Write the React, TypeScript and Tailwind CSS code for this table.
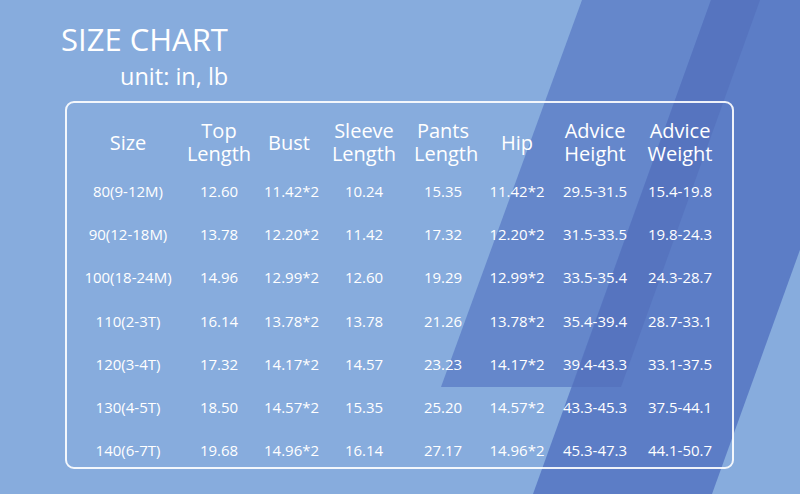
import React from 'react';

const headers: string[][] = [
  ['Size'],
  ['Top', 'Length'],
  ['Bust'],
  ['Sleeve', 'Length'],
  ['Pants', 'Length'],
  ['Hip'],
  ['Advice', 'Height'],
  ['Advice', 'Weight'],
];

const rows: string[][] = [
  ['80(9-12M)', '12.60', '11.42*2', '10.24', '15.35', '11.42*2', '29.5-31.5', '15.4-19.8'],
  ['90(12-18M)', '13.78', '12.20*2', '11.42', '17.32', '12.20*2', '31.5-33.5', '19.8-24.3'],
  ['100(18-24M)', '14.96', '12.99*2', '12.60', '19.29', '12.99*2', '33.5-35.4', '24.3-28.7'],
  ['110(2-3T)', '16.14', '13.78*2', '13.78', '21.26', '13.78*2', '35.4-39.4', '28.7-33.1'],
  ['120(3-4T)', '17.32', '14.17*2', '14.57', '23.23', '14.17*2', '39.4-43.3', '33.1-37.5'],
  ['130(4-5T)', '18.50', '14.57*2', '15.35', '25.20', '14.57*2', '43.3-45.3', '37.5-44.1'],
  ['140(6-7T)', '19.68', '14.96*2', '16.14', '27.17', '14.96*2', '45.3-47.3', '44.1-50.7'],
];

const cols = 'grid grid-cols-[92px_90px_50px_100px_58px_90px_66px_104px]';

// diagonal stripes behind the chart
const Stripes = () => (
  <svg
    className="absolute inset-0"
    width="800"
    height="494"
    viewBox="0 0 800 494"
    preserveAspectRatio="none"
  >
    <polygon points="582,0 760,0 621,387 441,387" fill="#6587cb" />
    <polygon points="711,0 890,0 712,494 533,494" fill="#5c7dc6" />
    <polygon points="711,0 760,0 621,387 572,387" fill="#5674bf" />
  </svg>
);

export default function App() {
  return (
    <div
      className="relative w-[800px] h-[494px] overflow-hidden bg-[#87acdd] text-white"
      style={{ fontFamily: '"Open Sans", "Noto Sans", sans-serif' }}
    >
      <Stripes />

      <div className="relative pl-[61px] pt-[24px]">
        <h1 className="text-[31px] leading-[31px] font-normal">SIZE CHART</h1>
        <p className="mt-[10px] ml-[59px] text-[23.5px] leading-[23px]">unit: in, lb</p>

        <div className="mt-[13px] ml-[4px] w-[669px] h-[368px] rounded-[9px] border-2 border-white/90 pl-[15px] pt-[16px]">
          {/* header */}
          <div className={`${cols} h-[46px] items-center`}>
            {headers.map((h, i) => (
              <div key={i} className="text-center text-[20px] leading-[23px] whitespace-nowrap">
                {h.length === 2 ? (
                  <>
                    {h[0]}
                    <br />
                    {h[1]}
                  </>
                ) : (
                  h[0]
                )}
              </div>
            ))}
          </div>

          {/* rows */}
          <div className="mt-[4.5px]">
            {rows.map((r) => (
              <div key={r[0]} className={`${cols} h-[43.2px] items-center`}>
                {r.map((v, i) => (
                  <div key={i} className="text-center text-[15px] leading-[20px] whitespace-nowrap">
                    {v}
                  </div>
                ))}
              </div>
            ))}
          </div>
        </div>
      </div>
    </div>
  );
}
